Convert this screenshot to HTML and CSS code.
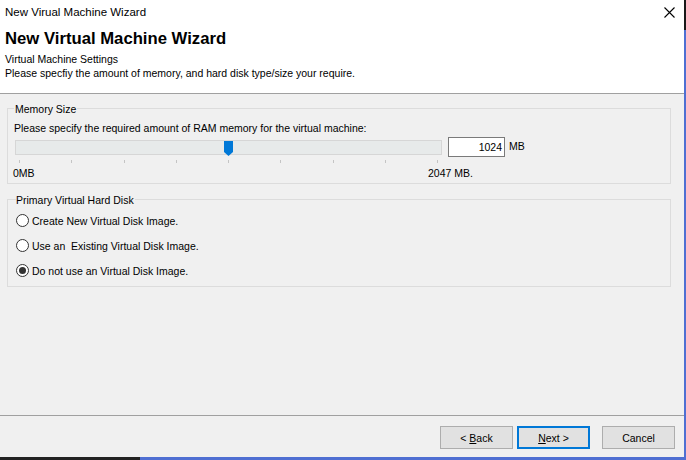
FILE: index.html
```html
<!DOCTYPE html>
<html lang="en">
<head>
<meta charset="utf-8">
<title>New Virual Machine Wizard</title>
<link rel="stylesheet" href="styles.css">
</head>
<body>
<div class="screen">
  <div class="window">
    <header class="header">
      <div class="titlebar">
        <span class="title-text">New Virual Machine Wizard</span>
        <svg class="close" width="11" height="11" viewBox="0 0 11 11"><path d="M0.5 0.5 L10.5 10.5 M10.5 0.5 L0.5 10.5" stroke="#000" stroke-width="1.1" fill="none"/></svg>
      </div>
      <h1 class="heading">New Virtual Machine Wizard</h1>
      <p class="sub">Virtual Machine Settings</p>
      <p class="sub">Please specfiy the amount of memory, and hard disk type/size your require.</p>
    </header>
    <main class="content">
      <fieldset class="group group-mem">
        <legend class="legend">Memory Size</legend>
        <p class="line">Please specify the required amount of RAM memory for the virtual machine:</p>
        <div class="slider-row">
          <div class="slider">
            <div class="track"></div>
            <svg class="thumb" width="9" height="15" viewBox="0 0 9 15"><polygon points="0,0 9,0 9,11 4.5,15 0,11" fill="#0078d7"/></svg>
            <div class="ticks">
              <span class="tick"></span><span class="tick"></span><span class="tick"></span>
              <span class="tick"></span><span class="tick"></span><span class="tick"></span>
              <span class="tick"></span><span class="tick"></span><span class="tick"></span>
            </div>
          </div>
          <div class="num-input">1024</div>
          <span class="unit">MB</span>
        </div>
        <div class="scale-labels">
          <span class="min">0MB</span>
          <span class="max">2047 MB.</span>
        </div>
      </fieldset>
      <fieldset class="group group-disk">
        <legend class="legend legend-disk">Primary Virtual Hard Disk</legend>
        <div class="radio-row"><span class="radio"></span><span>Create New Virtual Disk Image.</span></div>
        <div class="radio-row"><span class="radio"></span><span>Use an &nbsp;Existing Virtual Disk Image.</span></div>
        <div class="radio-row"><span class="radio checked"></span><span>Do not use an Virtual Disk Image.</span></div>
      </fieldset>
    </main>
    <footer class="footer">
      <button class="btn">&lt; <u>B</u>ack</button>
      <button class="btn btn-default"><u>N</u>ext &gt;</button>
      <button class="btn btn-cancel">Cancel</button>
    </footer>
  </div>
  <div class="edge-right"></div>
  <div class="edge-bottom"><span class="edge-black"></span></div>
  <div class="edge-corner"></div>
</div>
</body>
</html>
```
FILE: styles.css
```css
* { box-sizing: border-box; }
html, body { margin: 0; padding: 0; }
body {
  width: 686px;
  height: 460px;
  overflow: hidden;
  font-family: "Liberation Sans", Arial, sans-serif;
  font-size: 10.5px;
  color: #000;
  background: #4f6fd2;
}
.screen {
  display: grid;
  grid-template-columns: 684px 2px;
  grid-template-rows: 457px 3px;
  width: 686px;
  height: 460px;
}
.window {
  display: flex;
  flex-direction: column;
  background: #f0f0f0;
  overflow: hidden;
}
.edge-right {
  background: linear-gradient(to bottom, #1a1a1a 0, #1a1a1a 30px, #4f6fd2 30px);
}
.edge-bottom {
  display: flex;
  background: #4f6fd2;
}
.edge-black {
  width: 140px;
  background: #222;
}
.edge-corner { background: #4f6fd2; }

.header {
  height: 94px;
  background: #fff;
  border-bottom: 1px solid #a0a0a0;
  padding-left: 5px;
}
.titlebar {
  display: flex;
  justify-content: space-between;
  align-items: center;
  height: 24px;
}
.title-text {
  font-size: 11.5px;
  line-height: 24px;
}
.close {
  margin-right: 9px;
}
.heading {
  margin: 5px 0 0 0;
  font-size: 16.7px;
  line-height: 20px;
  font-weight: bold;
}
.sub {
  margin: 0;
  line-height: 14px;
}
.heading + .sub { margin-top: 3px; }

.content {
  flex: 1;
  padding: 6px 13px 0 7px;
}
.group {
  margin: 0;
  border: 1px solid #dcdcdc;
  min-width: 0;
}
.group-mem {
  padding: 6px 6px 3px 6px;
}
.legend {
  padding: 3px 1px 0 1px;
  line-height: 13px;
}
.line {
  margin: 0;
  line-height: 13px;
}
.slider-row {
  display: flex;
  align-items: flex-start;
  margin-top: 2px;
}
.slider {
  position: relative;
  width: 427px;
  margin-left: 1px;
}
.track {
  margin-top: 3px;
  height: 15px;
  background: #e7eaea;
  border: 1px solid #d6d6d6;
}
.thumb {
  position: absolute;
  left: 209px;
  top: 4px;
}
.ticks {
  display: flex;
  justify-content: space-between;
  width: 419px;
  margin: 5px 0 0 4px;
  height: 3px;
}
.tick {
  width: 1px;
  height: 3px;
  background: #c4c4c4;
}
.num-input {
  width: 57px;
  height: 20px;
  margin-left: 6px;
  border: 1px solid #7a7a7a;
  background: #fff;
  text-align: right;
  padding: 0 2px 0 0;
  line-height: 19px;
}
.unit {
  margin-left: 4px;
  line-height: 18px;
}
.scale-labels {
  display: flex;
  margin-top: 4px;
  margin-left: -1px;
  line-height: 13px;
}
.min { width: 415px; }

.group-disk {
  margin-top: 7px;
  padding: 1px 8px 3px 8px;
}
.legend-disk {
  padding: 3px 1px 0 0;
}
.radio-row {
  display: flex;
  align-items: center;
  height: 25px;
}
.radio {
  width: 13px;
  height: 13px;
  border: 1px solid #333;
  border-radius: 50%;
  background: #fff;
  margin-right: 3px;
  display: flex;
  align-items: center;
  justify-content: center;
}
.radio.checked::after {
  content: "";
  width: 7px;
  height: 7px;
  border-radius: 50%;
  background: #333;
}

.footer {
  height: 42px;
  border-top: 1px solid #a0a0a0;
  display: flex;
  justify-content: flex-end;
  align-items: flex-start;
  padding: 10px 9px 0 0;
}
.btn {
  width: 73px;
  height: 23px;
  margin: 0 0 0 4px;
  padding: 0;
  background: #e1e1e1;
  border: 1px solid #adadad;
  font-family: "Liberation Sans", Arial, sans-serif;
  font-size: 10.5px;
  color: #000;
}
.btn-default {
  border: 2px solid #0078d7;
}
.btn-cancel {
  margin-left: 12px;
}
```
